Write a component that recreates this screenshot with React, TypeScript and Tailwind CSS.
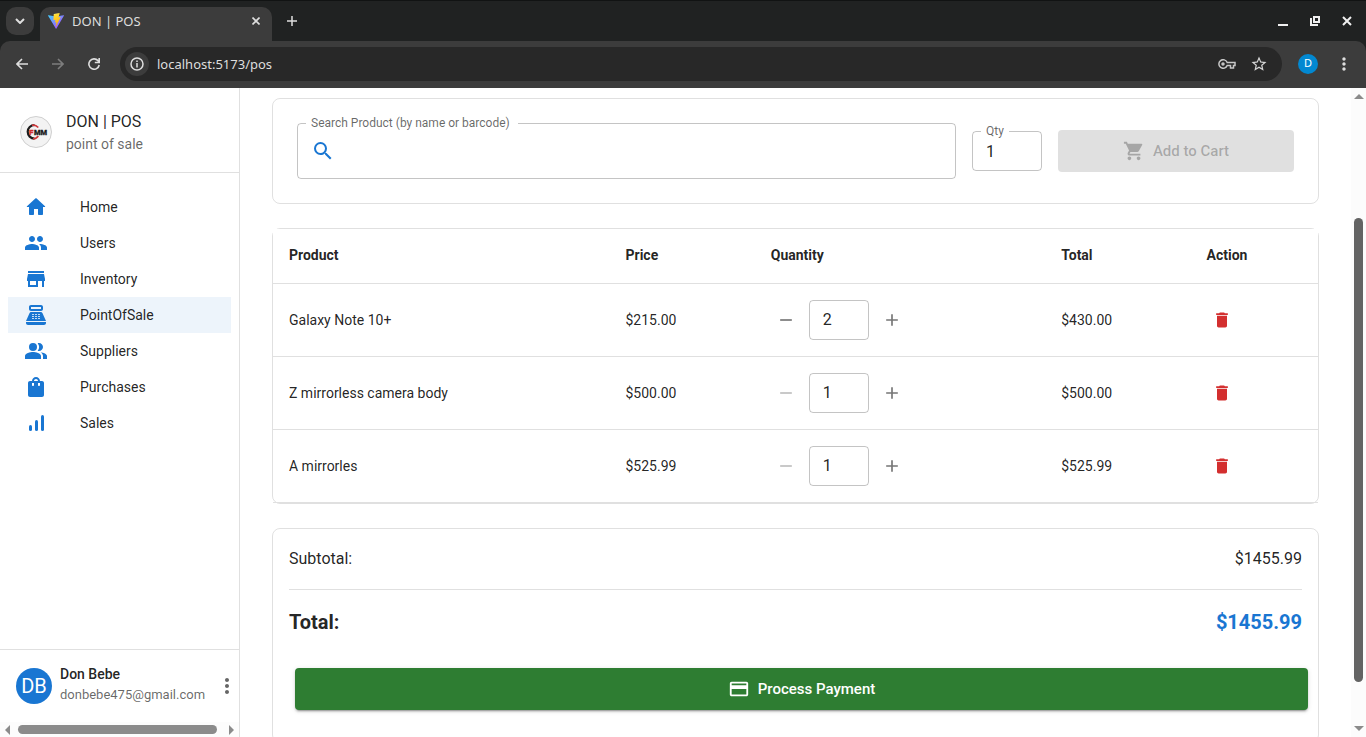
import { useState } from 'react'
import type { ReactNode } from 'react'
import {
  MdAdd,
  MdCreditCard,
  MdDelete,
  MdMoreVert,
  MdPeople,
  MdPeopleAlt,
  MdPointOfSale,
  MdRemove,
  MdSearch,
  MdShoppingBag,
  MdShoppingCart,
  MdStarBorder,
  MdStore,
} from 'react-icons/md'

type Item = { name: string; price: number; qty: number }

const initialItems: Item[] = [
  { name: 'Galaxy Note 10+', price: 215, qty: 2 },
  { name: 'Z mirrorless camera body', price: 500, qty: 1 },
  { name: 'A mirrorles', price: 525.99, qty: 1 },
]

const money = (n: number) => '$' + n.toFixed(2)

function ViteLogo() {
  return (
    <svg viewBox="0 0 32 32" className="size-4" aria-hidden="true">
      <defs>
        <linearGradient id="vite-v" x1="0" y1="0" x2="1" y2="1">
          <stop offset="0" stopColor="#41d1ff" />
          <stop offset="1" stopColor="#bd34fe" />
        </linearGradient>
        <linearGradient id="vite-bolt" x1="0.4" y1="0" x2="0.6" y2="1">
          <stop offset="0" stopColor="#ffea83" />
          <stop offset="0.1" stopColor="#ffdd35" />
          <stop offset="1" stopColor="#ffa800" />
        </linearGradient>
      </defs>
      <path fill="url(#vite-v)" d="M31.8 5.5 16.9 31.2a.8.8 0 0 1-1.4 0L.2 5.5a.8.8 0 0 1 .8-1.2l15 2.7h.3l14.700-2.700a.8.8 0 0 1 .8 1.200z" />
      <path fill="url(#vite-bolt)" d="m22.800 0-11 2.200a.4.4 0 0 0-.3.400l-.7 11.400a.4.4 0 0 0 .5.400l3.100-.7a.4.4 0 0 1 .5.500l-.9 4.500a.4.4 0 0 0 .5.500l1.900-.6a.4.4 0 0 1 .5.500l-1.400 7c-.1.400.5.700.7.300l.2-.2 8.900-17.800a.4.4 0 0 0-.4-.6l-3.200.6a.4.4 0 0 1-.5-.5l2.100-7.100a.4.4 0 0 0-.5-.5z" />
    </svg>
  )
}

function BrowserChrome() {
  return (
    <header className="shrink-0 border-t border-[#111313] bg-[#202222] font-['Noto_Sans',sans-serif] text-[#dedede]">
      <div className="flex h-10 items-center pr-3.5">
        <button aria-label="Search tabs" className="ml-1.5 flex size-7 items-center justify-center rounded-[10px] bg-[#3c3c3c]">
          <svg viewBox="0 0 10 6" className="h-1.5 w-2.5" fill="none" stroke="currentColor" strokeWidth="2">
            <path d="m1 1 4 4 4-4" />
          </svg>
        </button>
        <div className="ml-1.5 mt-1.5 flex h-[34px] w-[232px] items-center rounded-t-[10px] bg-[#3c3c3c] pb-1.5 pl-2 pr-3">
          <ViteLogo />
          <span className="ml-2 flex-1 text-[13px] leading-5">DON | POS</span>
          <button aria-label="Close tab">
            <svg viewBox="0 0 8 8" className="size-2" stroke="currentColor" strokeWidth="1.600">
              <path d="m.5.5 7 7m0-7-7 7" />
            </svg>
          </button>
        </div>
        <button aria-label="New tab" className="ml-[15px]">
          <svg viewBox="0 0 10 10" className="size-2.5" stroke="currentColor" strokeWidth="1.500">
            <path d="M5 0v10M0 5h10" />
          </svg>
        </button>
        <div className="ml-auto flex items-center gap-[22px] text-[#f0f0f0]">
          <button aria-label="Minimize">
            <svg viewBox="0 0 10 10" className="size-2.5" fill="currentColor">
              <path d="M0 8h10v2H0z" />
            </svg>
          </button>
          <button aria-label="Restore">
            <svg viewBox="0 0 10 10" className="size-2.5" fill="none" stroke="currentColor" strokeWidth="2">
              <path d="M4 1h5v5H4zM1 2v7h7" />
            </svg>
          </button>
          <button aria-label="Close window">
            <svg viewBox="0 0 10 10" className="size-2.5" stroke="currentColor" strokeWidth="2">
              <path d="m1 1 8 8m0-8-8 8" />
            </svg>
          </button>
        </div>
      </div>
      <div className="flex h-[47px] items-center rounded-t-[10px] bg-[#3c3c3c] pb-0.5 pl-4 pr-3">
        <button aria-label="Back">
          <svg viewBox="0 0 12 12" className="size-3" fill="none" stroke="currentColor" strokeWidth="1.600">
            <path d="M12 6H1m5-5L1 6l5 5" />
          </svg>
        </button>
        <button aria-label="Forward" className="ml-6 text-[#7d7d7d]">
          <svg viewBox="0 0 12 12" className="size-3" fill="none" stroke="currentColor" strokeWidth="1.600">
            <path d="M0 6h11M6 1l5 5-5 5" />
          </svg>
        </button>
        <button aria-label="Reload" className="ml-6">
          <svg viewBox="0 0 12 12" className="size-3" fill="none" stroke="currentColor" strokeWidth="1.600">
            <path d="M11.200 7A5.200 5.200 0 1 1 10 2.600L11.200 4M11.200 0v4.500H6.800" />
          </svg>
        </button>
        <div className="ml-5 flex h-[34px] flex-1 items-center rounded-full bg-[#282828] pl-[5px] pr-3.5">
          <button aria-label="Site information" className="flex size-6 items-center justify-center rounded-full bg-[#3c3c3c]">
            <svg viewBox="0 0 14 14" className="size-3.5" fill="none" stroke="currentColor" strokeWidth="1.500">
              <circle cx="7" cy="7" r="6" />
              <path d="M7 6v4.500M7 3.500V5" />
            </svg>
          </button>
          <input
            aria-label="Address"
            defaultValue="localhost:5173/pos"
            className="ml-2 min-w-0 flex-1 bg-transparent text-[13px] leading-5 outline-none"
          />
          <svg viewBox="0 0 18 10" className="w-[18px]" fill="none" stroke="#c7c7c7" strokeWidth="1.500" aria-hidden="true">
            <path d="M9.200 3.500H17v3h-1.500V9h-3V6.500H9.200A4.300 4.300 0 1 1 9.200 3.500z" />
            <circle cx="5" cy="5" r="1" fill="#c7c7c7" />
          </svg>
          <button aria-label="Bookmark this page" className="ml-[14px] text-[#d6d6d6]">
            <MdStarBorder className="size-[18px]" />
          </button>
        </div>
        <button className="ml-4 flex size-5 items-center justify-center rounded-full bg-[#0288d1] text-[11px] text-white">D</button>
        <button aria-label="Browser menu" className="ml-4">
          <MdMoreVert className="size-5" />
        </button>
      </div>
    </header>
  )
}

function HomeIcon() {
  return (
    <svg viewBox="0 0 24 24" fill="currentColor" className="size-6">
      <path d="M10 19v-5h4v5c0 .55.45 1 1 1h3c.55 0 1-.45 1-1v-7h1.700c.46 0 .68-.57.33-.87L12.670 3.600c-.38-.34-.96-.34-1.340 0l-8.360 7.530c-.34.3-.13.87.33.87H5v7c0 .55.45 1 1 1h3c.55 0 1-.45 1-1z" />
    </svg>
  )
}

function SalesIcon() {
  return (
    <svg viewBox="0 0 24 24" fill="currentColor" className="size-6">
      <rect x="5" y="14" width="3" height="6" rx="1.500" />
      <rect x="11" y="9" width="3" height="11" rx="1.500" />
      <rect x="17" y="4" width="3" height="16" rx="1.500" />
    </svg>
  )
}

const nav: { label: string; icon: ReactNode }[] = [
  { label: 'Home', icon: <HomeIcon /> },
  { label: 'Users', icon: <MdPeople className="size-6" /> },
  { label: 'Inventory', icon: <MdStore className="size-6" /> },
  { label: 'PointOfSale', icon: <MdPointOfSale className="size-6" /> },
  { label: 'Suppliers', icon: <MdPeopleAlt className="size-6" /> },
  { label: 'Purchases', icon: <MdShoppingBag className="size-6" /> },
  { label: 'Sales', icon: <SalesIcon /> },
]

function CompanyLogo() {
  return (
    <svg viewBox="0 0 32 32" className="size-8 shrink-0" role="img" aria-label="CFMM">
      <circle cx="16" cy="16" r="15.500" fill="#f3f3f3" stroke="#cfcfcf" />
      <path d="M14.500 9A6.800 6.800 0 1 0 14.500 22.600" fill="none" stroke="#1c1c1c" strokeWidth="2.200" />
      <path d="M12 9.200q3.800-.6 6.300 2.300M13 22.700q3.400.2 5.300-2.700" fill="none" stroke="#d0383b" strokeWidth="1.600" />
      <text x="9" y="19" fontSize="8" fontWeight="900" fill="#d32f2f" stroke="#d32f2f" strokeWidth=".3" className="font-['Roboto',sans-serif]">F</text>
      <text x="14" y="18.500" fontSize="7.500" fontWeight="900" fill="#1c1c1c" stroke="#1c1c1c" strokeWidth=".3" className="font-['Roboto',sans-serif]">MM</text>
    </svg>
  )
}

function Sidebar() {
  return (
    <aside className="flex w-60 shrink-0 flex-col border-r border-black/12">
      <div className="flex h-[85px] items-center gap-3.5 border-b border-black/12 pl-5 pt-1">
        <CompanyLogo />
        <div>
          <p className="text-base leading-6">DON | POS</p>
          <p className="text-sm leading-5 text-black/60">point of sale</p>
        </div>
      </div>
      <nav className="flex-1 px-2 pt-4">
        {nav.map(({ label, icon }) => (
          <a
            key={label}
            href={'#' + label.toLowerCase()}
            aria-current={label === 'PointOfSale' ? 'page' : undefined}
            className="flex h-9 items-center pl-4 text-sm aria-[current=page]:bg-[#1976d2]/8"
          >
            <span className="w-14 text-[#1976d2]">{icon}</span>
            {label}
          </a>
        ))}
      </nav>
      <div className="flex h-[73px] items-center border-t border-black/12 pl-4 pr-1">
        <span className="flex size-9 shrink-0 items-center justify-center rounded-full bg-[#1976d2] text-xl text-white">DB</span>
        <div className="ml-2 flex-1 pb-0.5">
          <p className="text-sm font-medium leading-5">Don Bebe</p>
          <p className="text-[13px] leading-[22px] text-black/60">donbebe475@gmail.com</p>
        </div>
        <button aria-label="Account options" className="-mr-1 text-black/60">
          <MdMoreVert className="size-6" />
        </button>
      </div>
      <div className="flex h-[15px] items-center bg-[#fcfcfc] px-[5px]" aria-hidden="true">
        <svg viewBox="0 0 5 10" className="h-2.5 w-[5px]" fill="#8b8b8b"><path d="M5 0v10L0 5z" /></svg>
        <span className="ml-2 mr-3 h-[9px] flex-1 rounded-full bg-[#8b8b8b]" />
        <svg viewBox="0 0 5 10" className="h-2.5 w-[5px]" fill="#8b8b8b"><path d="M0 0v10l5-5z" /></svg>
      </div>
    </aside>
  )
}

function SearchCard() {
  return (
    <section className="grid grid-cols-[minmax(0,1fr)_70px_236px] items-center gap-4 rounded-lg border border-black/12 p-6">
      <div className="relative flex h-14 items-center rounded border border-black/23 px-[13px]">
        <label htmlFor="search" className="absolute -top-[9px] left-2 bg-white pl-[5px] pr-2 text-xs text-black/60">
          Search Product (by name or barcode)
        </label>
        <MdSearch className="size-6 text-[#1976d2]" />
        <input id="search" className="ml-2 h-full min-w-0 flex-1 outline-none" />
      </div>
      <div className="relative flex h-10 rounded border border-black/23">
        <label htmlFor="qty" className="absolute -top-[9px] left-2 bg-white px-[5px] text-xs text-black/60">
          Qty
        </label>
        <input id="qty" defaultValue="1" className="w-full px-[13px] pt-0.5 text-base outline-none" />
      </div>
      <button disabled className="flex h-[42px] items-center justify-center gap-2 rounded bg-black/12 text-[15px] font-medium text-black/26">
        <MdShoppingCart className="size-[22px]" />
        Add to Cart
      </button>
    </section>
  )
}

function CartTable({ items, onQty, onRemove }: { items: Item[]; onQty: (i: number, qty: number) => void; onRemove: (i: number) => void }) {
  return (
    <section className="rounded-lg border border-black/12">
      <table className="w-full table-fixed border-separate border-spacing-0 text-left text-sm">
        <colgroup>
          <col className="w-[32.2%]" />
          <col className="w-[13.9%]" />
          <col className="w-[27.8%]" />
          <col className="w-[13.9%]" />
          <col />
        </colgroup>
        <thead>
          <tr className="h-[55px]">
            {['Product', 'Price', 'Quantity', 'Total', 'Action'].map((h) => (
              <th key={h} className="border-b border-[#e0e0e0] bg-white px-4 pb-0.5 pt-0 font-bold">{h}</th>
            ))}
          </tr>
        </thead>
        <tbody>
          {items.map((item, i) => (
            <tr key={item.name} className="h-[73px]">
              <td className="border-b border-[#e0e0e0] px-4">{item.name}</td>
              <td className="border-b border-[#e0e0e0] px-4">{money(item.price)}</td>
              <td className="border-b border-[#e0e0e0] px-4">
                <div className="flex items-center gap-2">
                  <button
                    aria-label={'Decrease ' + item.name}
                    disabled={item.qty <= 1}
                    onClick={() => onQty(i, item.qty - 1)}
                    className="p-[5px] text-black/54 disabled:text-black/26"
                  >
                    <MdRemove className="size-5" />
                  </button>
                  <input
                    aria-label={'Quantity of ' + item.name}
                    value={item.qty}
                    onChange={(e) => onQty(i, Math.max(1, Number(e.target.value) || 1))}
                    className="h-10 w-[60px] rounded border border-black/23 px-[13px] pb-0.5 text-base outline-none"
                  />
                  <button aria-label={'Increase ' + item.name} onClick={() => onQty(i, item.qty + 1)} className="p-[5px] text-black/54">
                    <MdAdd className="size-5" />
                  </button>
                </div>
              </td>
              <td className="border-b border-[#e0e0e0] px-4">{money(item.price * item.qty)}</td>
              <td className="border-b border-[#e0e0e0] px-4">
                <button aria-label={'Remove ' + item.name} onClick={() => onRemove(i)} className="block p-1.5 text-[#d32f2f]">
                  <MdDelete className="size-5" />
                </button>
              </td>
            </tr>
          ))}
        </tbody>
      </table>
    </section>
  )
}

function Summary({ total }: { total: number }) {
  return (
    <section className="rounded-lg border border-black/12 px-4 pb-8 pt-[18px]">
      <div className="flex justify-between border-b border-black/12 pb-[18px] text-base leading-6">
        <span>Subtotal:</span>
        <span>{money(total)}</span>
      </div>
      <div className="flex justify-between pt-4 text-xl font-bold leading-8">
        <span>Total:</span>
        <span className="text-[#1976d2]">{money(total)}</span>
      </div>
      <button className="ml-1.5 mt-[30px] flex h-[42px] w-full items-center justify-center gap-2 rounded bg-[#2e7d32] text-[15px] font-medium text-white shadow-[0_3px_1px_-2px_rgba(0,0,0,0.2),0_2px_2px_0_rgba(0,0,0,0.14),0_1px_5px_0_rgba(0,0,0,0.12)]">
        <MdCreditCard className="size-[22px]" />
        Process Payment
      </button>
    </section>
  )
}

export default function App() {
  const [items, setItems] = useState(initialItems)
  const total = items.reduce((sum, item) => sum + item.price * item.qty, 0)

  return (
    <div className="flex h-screen flex-col overflow-hidden bg-white">
      <BrowserChrome />
      <div className="flex min-h-0 flex-1 font-['Roboto',sans-serif] text-black/87">
        <Sidebar />
        <main className="flex min-w-0 flex-1 flex-col gap-6 overflow-hidden px-8 pt-2.5">
          <SearchCard />
          <CartTable
            items={items}
            onQty={(i, qty) => setItems(items.map((item, n) => (n === i ? { ...item, qty } : item)))}
            onRemove={(i) => setItems(items.filter((_, n) => n !== i))}
          />
          <Summary total={total} />
        </main>
        <div className="flex w-[15px] shrink-0 flex-col items-center bg-[#fcfcfc] py-1.5" aria-hidden="true">
          <svg viewBox="0 0 10 5" className="h-[5px] w-2.5" fill="#8b8b8b"><path d="M0 5h10L5 0z" /></svg>
          <div className="flex w-full flex-1 flex-col items-center py-1">
            <span className="flex-[115]" />
            <span className="w-[9px] flex-[463] rounded-full bg-[#636363]" />
            <span className="flex-[40]" />
          </div>
          <svg viewBox="0 0 10 5" className="h-[5px] w-2.5" fill="#8b8b8b"><path d="M0 0h10L5 5z" /></svg>
        </div>
      </div>
    </div>
  )
}
